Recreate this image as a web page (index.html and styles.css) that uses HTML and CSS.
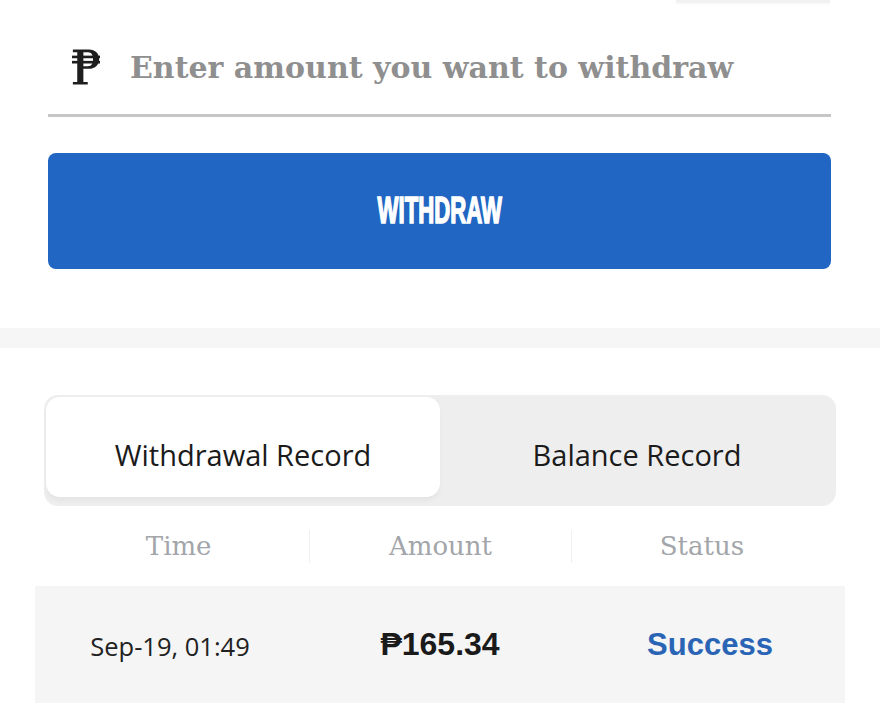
FILE: index.html
```html
<!DOCTYPE html>
<html lang="en">
<head>
    <meta charset="UTF-8">
    <meta name="viewport" content="width=device-width, initial-scale=1.0">
    <title>Withdraw</title>
    <link rel="stylesheet" href="styles.css">
</head>
<body>

    <div class="top-chip"></div>

    <div class="withdraw-form">
        <label class="amount-field">
            <svg class="peso" viewBox="0 0 32 42" aria-hidden="true">
                <path d="M1 1 H19 C27 1 31 6 31 12 C31 18 27 23 19 23 H13 V38 H18 V41 H1 V38 H6 V4 H1 Z M13 4 V20 H18 C23 20 24 16 24 12 C24 8 23 4 18 4 Z" fill="#1e1e1e"/>
                <rect x="0" y="8" width="32" height="3" fill="#1e1e1e"/>
                <rect x="0" y="14" width="32" height="3" fill="#1e1e1e"/>
            </svg>
            <input type="text" placeholder="Enter amount you want to withdraw">
        </label>
        <button type="button" class="withdraw-btn"><span>WITHDRAW</span></button>
    </div>

    <div class="divider-band"></div>

    <div class="records">
        <div class="tabs">
            <div class="tab active">Withdrawal Record</div>
            <div class="tab">Balance Record</div>
        </div>

        <div class="table-head">
            <div>Time</div>
            <div>Amount</div>
            <div>Status</div>
        </div>

        <div class="table-row">
            <div class="time">Sep-19, 01:49</div>
            <div class="amount">₱165.34</div>
            <div class="status">Success</div>
        </div>
    </div>

</body>
</html>
```

FILE: styles.css
```css
body {
    margin: 0;
    padding: 0;
    background-color: #fff;
    font-family: "Open Sans", sans-serif;
}

.top-chip {
    width: 154px;
    height: 3px;
    margin-left: 676px;
    background-color: #f2f2f2;
    box-shadow: 0 1px 3px rgba(0, 0, 0, 0.04);
}

.withdraw-form {
    padding: 0 49px 0 48px;
}

.amount-field {
    display: flex;
    align-items: center;
    box-sizing: border-box;
    height: 114px;
    padding: 17px 0 0 24px;
    border-bottom: 3px solid #c6c6c6;
}

.peso {
    flex: none;
    width: 28px;
    height: 42px;
    margin-right: 30px;
}

.amount-field input {
    flex: 1;
    min-width: 0;
    border: none;
    outline: none;
    padding: 0;
    background: transparent;
    font-family: "DejaVu Serif", serif;
    font-weight: bold;
    font-size: 30px;
    color: #333;
}

.amount-field input::placeholder {
    color: #8f8f8f;
}

.withdraw-btn {
    display: block;
    width: 100%;
    height: 116px;
    margin-top: 36px;
    background-color: #2066c2;
    border: none;
    border-radius: 8px;
    color: #fff;
    cursor: pointer;
}

.withdraw-btn span {
    display: inline-block;
    font-family: "Liberation Sans", sans-serif;
    font-weight: bold;
    font-size: 37px;
    -webkit-text-stroke: 1.6px #fff;
    transform: scaleX(0.6);
}

.divider-band {
    height: 20px;
    margin-top: 59px;
    background-color: #f6f6f6;
}

.records {
    padding: 47px 35px 0 35px;
}

.tabs {
    display: grid;
    grid-template-columns: 394px 1fr;
    height: 111px;
    box-sizing: border-box;
    margin: 0 9px;
    padding: 2px 2px 9px 2px;
    background-color: #eeeeee;
    border-radius: 14px;
}

.tab {
    display: flex;
    align-items: center;
    justify-content: center;
    padding-top: 14px;
    font-size: 29px;
    font-weight: 500;
    color: #1b1b1b;
}

.tab.active {
    background-color: #fff;
    border-radius: 14px;
    box-shadow: 0 4px 4px rgba(0, 0, 0, 0.04);
}

.table-head {
    display: grid;
    grid-template-columns: repeat(3, 1fr);
    margin: 0 13px;
    padding: 24px 0 23px 0;
    font-family: "DejaVu Serif", serif;
    font-size: 26px;
    color: #a2a5a9;
    text-align: center;
}

.table-head div {
    height: 33px;
    line-height: 33px;
}

.table-head div + div {
    border-left: 1px solid #f0f0f0;
}

.table-row {
    display: grid;
    grid-template-columns: repeat(3, 1fr);
    align-items: center;
    height: 117px;
    background-color: #f5f5f5;
    text-align: center;
}

.time {
    padding-top: 2px;
    font-size: 25.5px;
    color: #222;
}

.amount {
    font-family: "Liberation Sans", sans-serif;
    font-weight: bold;
    font-size: 32px;
    color: #1a1a1a;
}

.status {
    font-family: "Liberation Sans", sans-serif;
    font-weight: bold;
    font-size: 31px;
    color: #2a64b5;
}
```
